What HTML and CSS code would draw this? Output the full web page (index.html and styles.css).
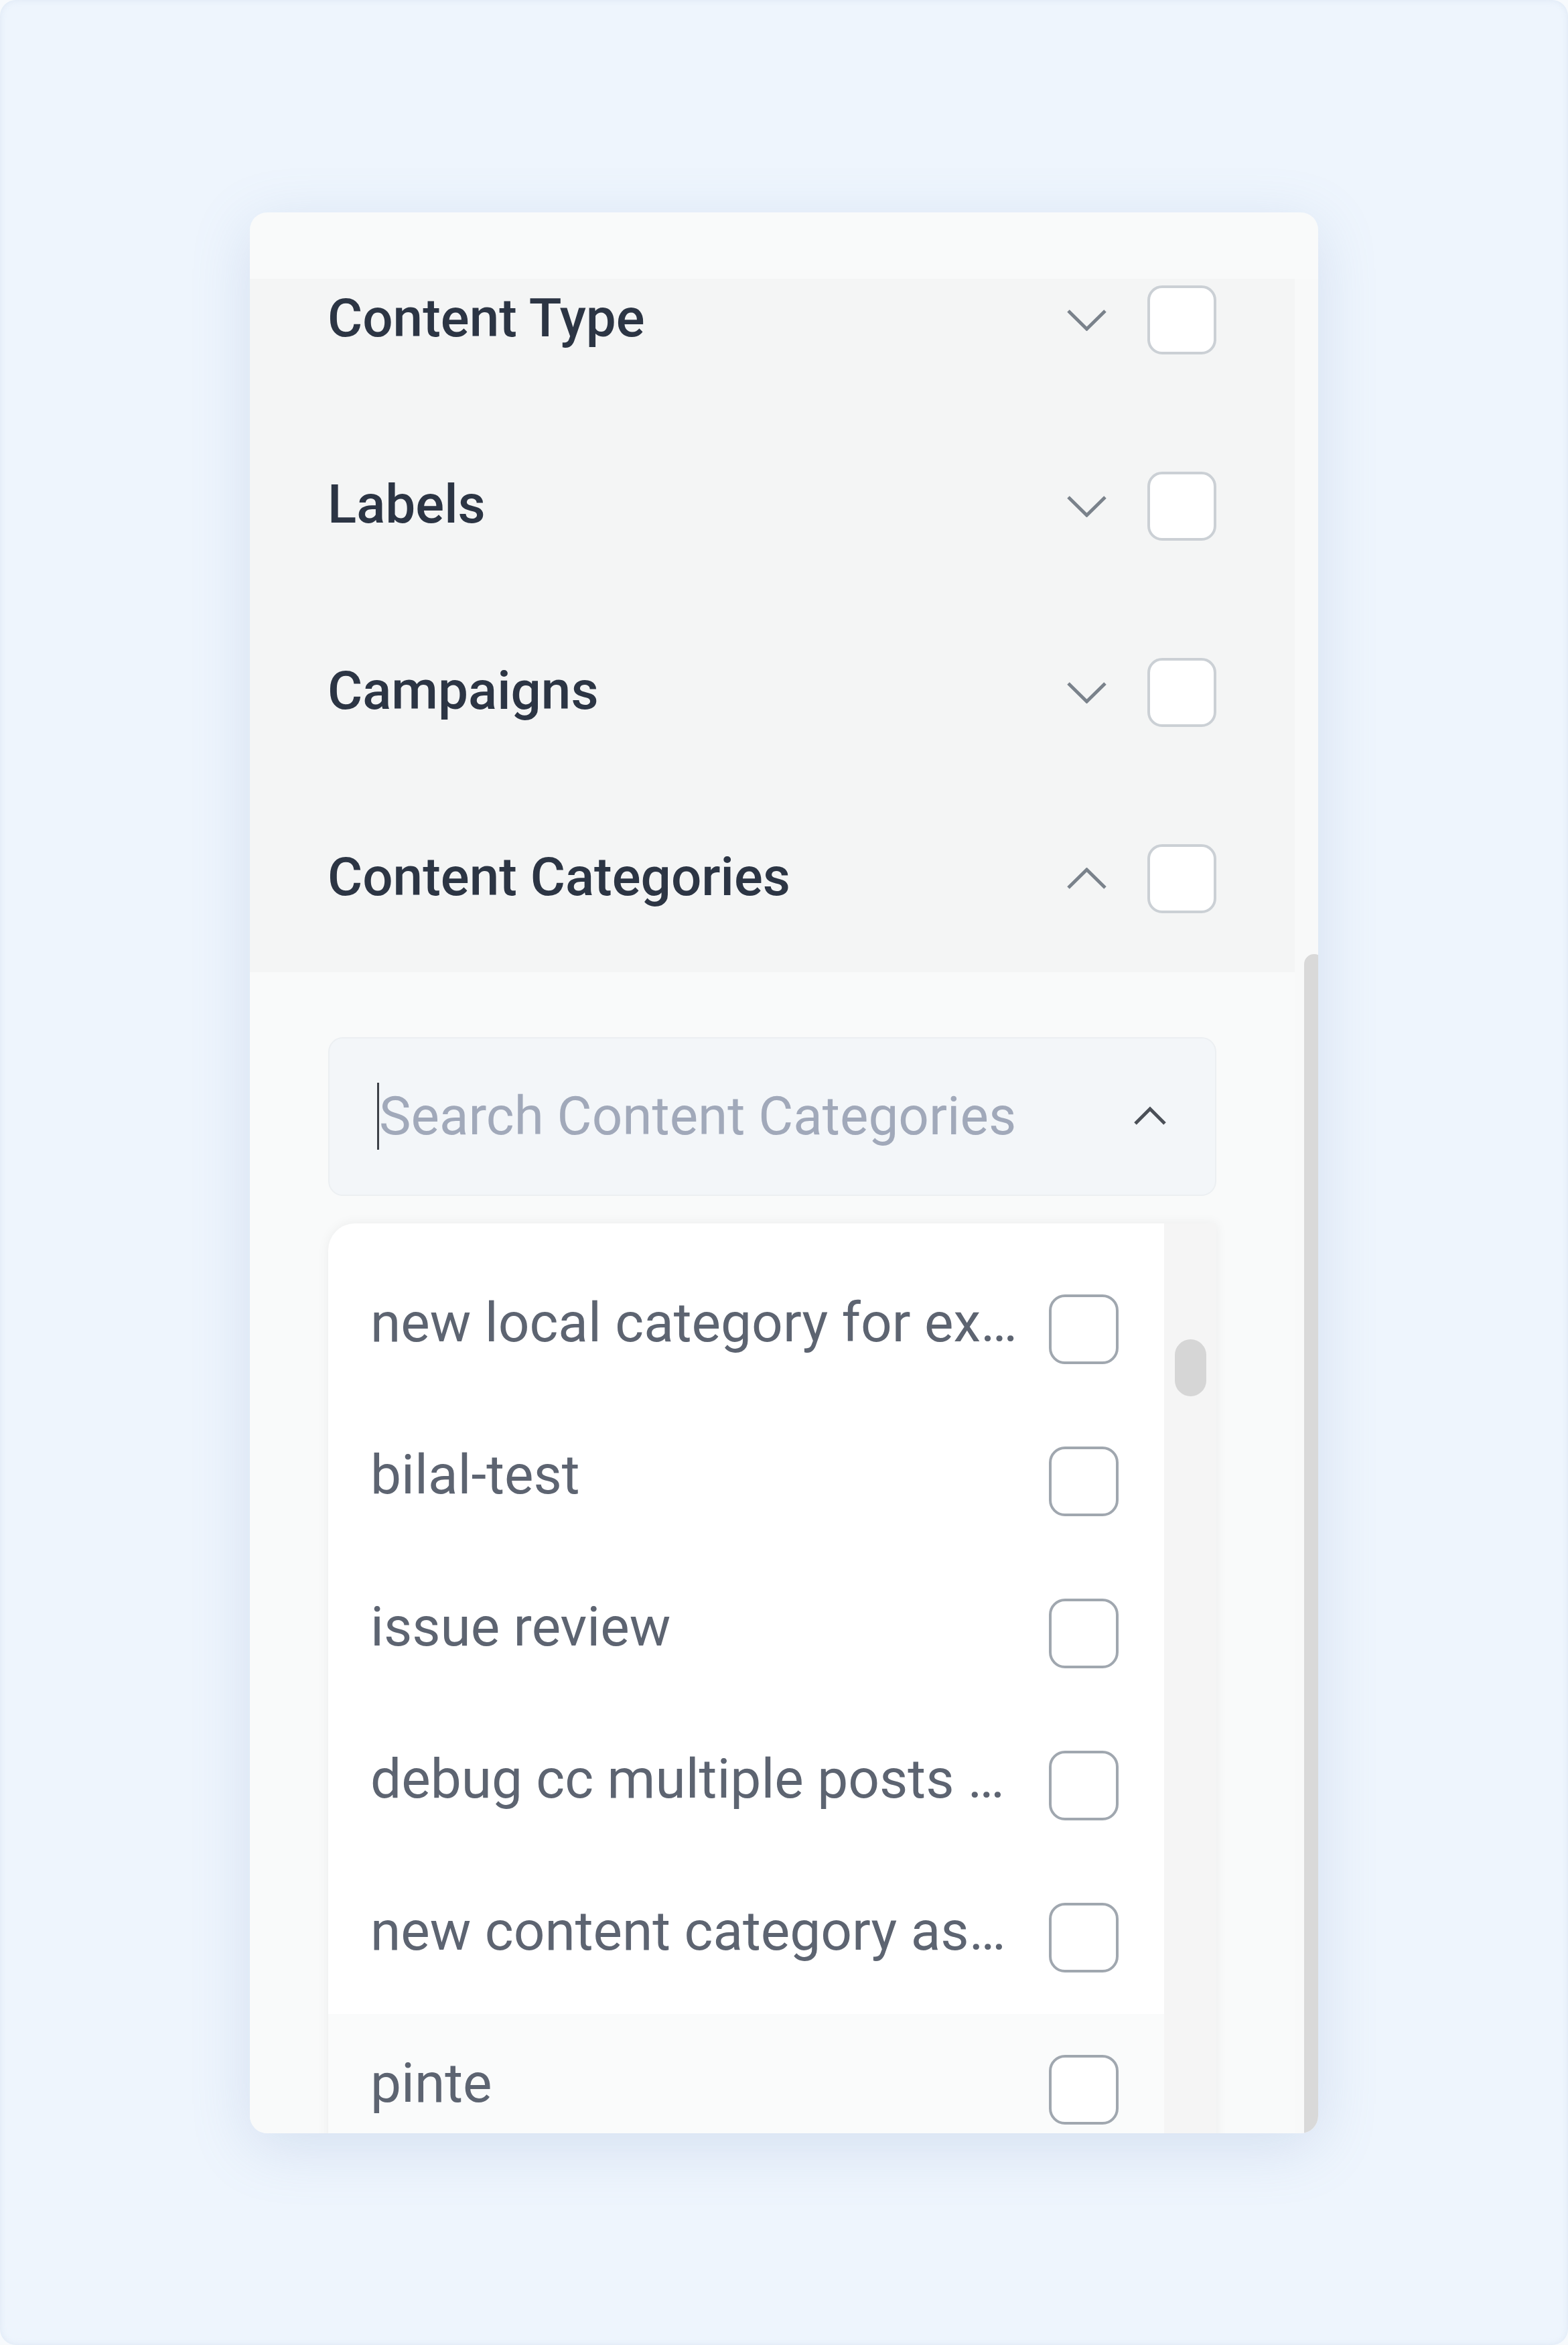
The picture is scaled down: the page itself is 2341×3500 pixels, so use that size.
FILE: index.html
```html
<!DOCTYPE html>
<html lang="en">
<head>
  <meta charset="UTF-8" />
  <meta name="viewport" content="width=device-width, initial-scale=1.0"/>
  <title>Filters</title>
  <link rel="stylesheet" href="styles.css">
</head>
<body>
  <div class="frame">
    <div class="card">
      <div class="card-top"></div>

      <div class="card-body">
        <div class="filters">
          <div class="filter-list">
            <div class="filter-row">
              <span class="filter-name">Content Type</span>
              <svg class="chevron" viewBox="0 0 61 33"><path d="M3 3 L30.5 30 L58 3"/></svg>
              <span class="checkbox"></span>
            </div>
            <div class="filter-row">
              <span class="filter-name">Labels</span>
              <svg class="chevron" viewBox="0 0 61 33"><path d="M3 3 L30.5 30 L58 3"/></svg>
              <span class="checkbox"></span>
            </div>
            <div class="filter-row">
              <span class="filter-name">Campaigns</span>
              <svg class="chevron" viewBox="0 0 61 33"><path d="M3 3 L30.5 30 L58 3"/></svg>
              <span class="checkbox"></span>
            </div>
            <div class="filter-row">
              <span class="filter-name">Content Categories</span>
              <svg class="chevron" viewBox="0 0 61 33"><path d="M3 30 L30.5 3 L58 30"/></svg>
              <span class="checkbox"></span>
            </div>
          </div>

          <div class="category-panel">
            <div class="search-box">
              <span class="caret"></span>
              <span class="placeholder">Search Content Categories</span>
              <svg class="search-chevron" viewBox="0 0 52 30"><path d="M4 26 L26 4 L48 26"/></svg>
            </div>

            <div class="option-list">
              <div class="options">
                <div class="option">
                  <span class="option-name">new local category for ex…</span>
                  <span class="checkbox"></span>
                </div>
                <div class="option">
                  <span class="option-name">bilal-test</span>
                  <span class="checkbox"></span>
                </div>
                <div class="option">
                  <span class="option-name">issue review</span>
                  <span class="checkbox"></span>
                </div>
                <div class="option">
                  <span class="option-name">debug cc multiple posts …</span>
                  <span class="checkbox"></span>
                </div>
                <div class="option">
                  <span class="option-name">new content category as…</span>
                  <span class="checkbox"></span>
                </div>
                <div class="option is-hover">
                  <span class="option-name">pinte</span>
                  <span class="checkbox"></span>
                </div>
              </div>
              <div class="list-scroll"><div class="list-thumb"></div></div>
            </div>
          </div>
        </div>

        <div class="card-scroll"><div class="card-thumb"></div></div>
      </div>
    </div>
  </div>
</body>
</html>
```

FILE: styles.css
```css
html,
body {
  margin: 0;
  background: #f7fafd;
}

body {
  font-family: Roboto, 'Noto Sans', sans-serif;
}

.frame {
  width: 2341px;
  height: 3500px;
  border-radius: 24px;
  background: #eef5fd;
  box-shadow: inset 0 0 10px rgba(200, 215, 235, 0.45);
  display: flex;
  align-items: center;
  justify-content: center;
}

.card {
  width: 1595px;
  height: 2867px;
  border-radius: 26px;
  background: #f9fafa;
  overflow: hidden;
  display: flex;
  flex-direction: column;
  box-shadow: 0 20px 90px rgba(110, 140, 190, 0.2);
}

.card-top {
  height: 99px;
  flex: none;
}

.card-body {
  flex: 1;
  display: flex;
  min-height: 0;
}

.filters {
  width: 1560px;
  flex: none;
  overflow: hidden;
  display: flex;
  flex-direction: column;
}

/* list is scrolled a little, so the first row is cut at the top */
.filter-list {
  margin-top: -77px;
  background: #f4f5f5;
}

.filter-row {
  height: 278px;
  display: flex;
  align-items: center;
  padding: 0 117px 0 116px;
}

.filter-name {
  flex: 1;
  font-size: 80px;
  font-weight: 500;
  color: #2c3544;
  margin-bottom: 6px;
}

.chevron {
  width: 61px;
  height: 33px;
  margin-right: 60px;
  fill: none;
  stroke: #7a828b;
  stroke-width: 5;
}

.checkbox {
  width: 103px;
  height: 103px;
  box-sizing: border-box;
  border: 4px solid #cbd0d5;
  border-radius: 22px;
  background: #fff;
  flex: none;
}

.category-panel {
  flex: 1;
  padding: 97px 117px 0;
  background: #f9fafa;
}

.search-box {
  height: 237px;
  box-sizing: border-box;
  border: 2px solid #eceff2;
  border-radius: 22px;
  background: #f3f6f9;
  display: flex;
  align-items: center;
  padding: 0 71px 0 71px;
}

.caret {
  width: 3px;
  height: 100px;
  background: #3d4148;
  flex: none;
}

.placeholder {
  flex: 1;
  font-size: 80px;
  color: #a1a9ba;
}

.search-chevron {
  width: 52px;
  height: 30px;
  fill: none;
  stroke: #4b5058;
  stroke-width: 5;
}

.option-list {
  margin-top: 41px;
  height: 1500px;
  display: flex;
  background: #fff;
  border-radius: 40px 0 0 0;
  box-shadow: 0 0 18px rgba(0, 0, 0, 0.06);
}

.options {
  flex: 1;
  min-width: 0;
  padding-top: 45px;
}

.option {
  height: 227px;
  display: flex;
  align-items: center;
  gap: 28px;
  padding: 0 68px 0 63px;
}

.option.is-hover {
  background: #fafbfb;
}

.option-name {
  flex: 1;
  min-width: 0;
  font-size: 82px;
  color: #5d6471;
  white-space: nowrap;
  overflow: hidden;
  margin-bottom: 20px;
}

.option .checkbox {
  width: 104px;
  height: 104px;
  border-color: #a0a7af;
  border-radius: 24px;
}

.list-scroll {
  width: 78px;
  flex: none;
  background: #f5f5f5;
  padding-top: 173px;
}

.list-thumb {
  width: 47px;
  height: 85px;
  margin-left: 16px;
  border-radius: 24px;
  background: #d6d6d6;
}

.card-scroll {
  flex: 1;
  background: #f8f9f9;
}

.card-thumb {
  width: 30px;
  height: 1900px;
  margin: 1008px 0 0 14px;
  border-radius: 15px;
  background: #d9d9d9;
}
```
